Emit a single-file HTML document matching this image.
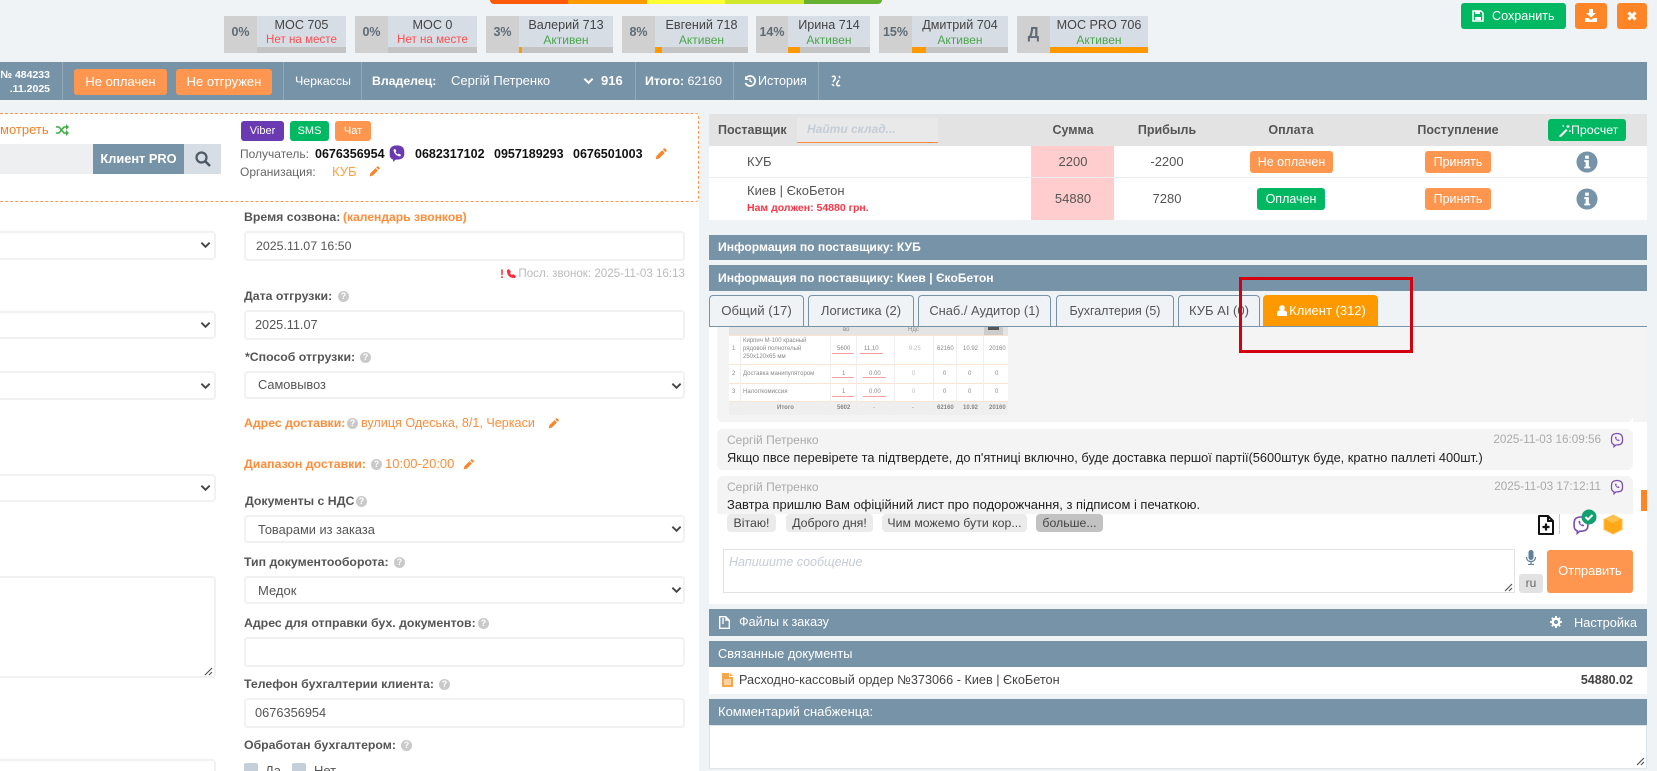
<!DOCTYPE html>
<html lang="ru"><head><meta charset="utf-8"><title>Заказ</title>
<style>
html{margin:0;padding:0;width:1657px;height:771px;overflow:hidden}
body{margin:0;padding:0;width:1657px;height:771px;overflow:hidden;position:relative;background:#eff3f6;font-family:"Liberation Sans",sans-serif;font-size:13px;color:#555}
.a{position:absolute}
.t{position:absolute;line-height:20px;height:20px;white-space:nowrap}
.b{font-weight:bold}
.c{text-align:center}
.l{font-size:12.3px}
.btn{position:absolute;border-radius:3px;color:#fff;text-align:center;white-space:nowrap}
.bar{position:absolute;left:709px;width:938px;background:#7793a8;color:#fff}
.inp{position:absolute;box-sizing:border-box;background:#fff;border:2px solid #f1f1f1;border-radius:4px}
.chip{position:absolute;top:16px;height:37px;background:#d7dde5}
.chip i{position:absolute;left:0;top:0;bottom:0;background:#d0d0d0;font-style:normal;font-weight:bold;color:#5f6b77;text-align:center;line-height:33px;font-size:12.5px}
.chip b{position:absolute;top:0;right:0;font-weight:normal;font-size:12.6px;color:#444;text-align:center;line-height:18px;padding-top:0}
.chip u{position:absolute;right:0;text-decoration:none;top:15px;font-size:12px;text-align:center;line-height:18px}
.chip u.r{font-size:11.6px;color:#ff4d4d}
.chip u.g{color:#4aa64a}
.chip s{position:absolute;right:0;bottom:0;height:6px;background:#c4c4c4;text-decoration:none}
.chip s em{position:absolute;left:0;top:0;height:6px;background:#ff9900}
.q{position:absolute;width:11px;height:11px;border-radius:50%;background:#c9c9c9;color:#fff;font-size:9px;font-weight:bold;text-align:center;line-height:11px}
.sep{position:absolute;top:62px;height:38px;width:1px;background:#93a9ba}
.tab{position:absolute;top:295px;height:31px;box-sizing:border-box;border:1px solid #7793a8;border-bottom:0;border-radius:4px 4px 0 0;text-align:center;line-height:30px;color:#555;font-size:13px;white-space:nowrap}
.qr{position:absolute;top:514px;height:18px;background:#ebebeb;border-radius:4px;text-align:center;line-height:19px;font-size:12.3px;color:#444;white-space:nowrap}
.msg{position:absolute;left:717px;width:916px;background:#f4f4f4}
.im{position:absolute;font-size:6px;color:#888;line-height:8px;white-space:nowrap}
svg{position:absolute;display:block}
</style></head><body>
<svg width="0" height="0" style="position:absolute"><defs>
<symbol id="pen" viewBox="0 0 16 16"><path d="M1 15l1-4.500 7.500-7.500 3.500 3.500L5.500 14zM10.500 2l1.500-1.500a1 1 0 0 1 1.400 0l2.100 2.100a1 1 0 0 1 0 1.400L14 5.500z" fill="#f5862c"/></symbol>
<symbol id="chev" viewBox="0 0 12 8"><path d="M1.500 1.500L6 6l4.500-4.500" fill="none" stroke="#444" stroke-width="2"/></symbol>
<symbol id="vib" viewBox="0 0 16 16"><path d="M8 .8C4 .8 1.500 2.500 1.500 6.500v2.500c0 2.500 1.200 3.800 3 4.300v2.200l2.300-2.100H8c4.300 0 6.500-1.800 6.500-5V6.500C14.500 2.500 12 .8 8 .8z" fill="#6a3ab2"/><path d="M5 4.500l1.300-.6 1.200 2-.8.8c.4 1 1.100 1.700 2.100 2.100l.8-.8 2 1.200-.6 1.300c-3 .3-6.300-3-6-6z" fill="#fff"/></symbol>
<symbol id="vibo" viewBox="0 0 16 16"><path d="M8 1.500C4.500 1.500 2.500 3 2.500 6.500v2.500c0 2 1 3.200 2.500 3.700v2l2-1.800h1c3.500 0 5.500-1.500 5.500-4.300V6.500C13.500 3 11.500 1.500 8 1.500z" fill="none" stroke="#7d51b8" stroke-width="1.300"/><path d="M6 5l1-.5.800 1.400-.5.600c.3.600.7 1 1.300 1.300l.6-.5 1.400.8-.5 1c-2 .2-4.300-2.100-4.100-4.100z" fill="#7d51b8"/></symbol>
</defs></svg>

<!-- top rainbow -->
<div class="a" style="left:490px;top:0;width:392px;height:4px;border-radius:0 0 6px 6px;overflow:hidden;display:flex">
<div style="flex:1;background:#ff5a0a"></div><div style="flex:1;background:#ff9900"></div><div style="flex:1;background:#ffff33"></div><div style="flex:1;background:#d0e82a"></div><div style="flex:1;background:#66b032"></div></div>

<!-- chips -->
<div class="chip" style="left:224px;width:122px"><i style="width:33px">0%</i><b style="width:89px">МОС 705</b><u class="r" style="width:89px">Нет на месте</u><s style="width:89px"></s></div>
<div class="chip" style="left:355px;width:122px"><i style="width:33px">0%</i><b style="width:89px">МОС 0</b><u class="r" style="width:89px">Нет на месте</u><s style="width:89px"></s></div>
<div class="chip" style="left:486px;width:127px"><i style="width:33px">3%</i><b style="width:94px">Валерий 713</b><u class="g" style="width:94px">Активен</u><s style="width:94px"><em style="width:3px"></em></s></div>
<div class="chip" style="left:622px;width:126px"><i style="width:33px">8%</i><b style="width:93px">Евгений 718</b><u class="g" style="width:93px">Активен</u><s style="width:93px"><em style="width:7px"></em></s></div>
<div class="chip" style="left:756px;width:114px"><i style="width:32px">14%</i><b style="width:82px">Ирина 714</b><u class="g" style="width:82px">Активен</u><s style="width:82px"><em style="width:12px"></em></s></div>
<div class="chip" style="left:879px;width:129px"><i style="width:33px">15%</i><b style="width:96px">Дмитрий 704</b><u class="g" style="width:96px">Активен</u><s style="width:96px"><em style="width:14px"></em></s></div>
<div class="chip" style="left:1017px;width:131px"><i style="width:33px;font-size:16px;line-height:36px">Д</i><b style="width:98px">МОС PRO 706</b><u class="g" style="width:98px">Активен</u><s style="width:98px"><em style="width:98px"></em></s></div>

<!-- save buttons -->
<div class="btn" style="left:1461px;top:3px;width:105px;height:26px;background:#00b862;line-height:26px;text-align:left;text-indent:31px;font-size:12.6px">Сохранить</div>
<svg style="left:1472px;top:10px" width="12" height="12" viewBox="0 0 12 12"><path d="M1 1h8l2 2v8H1z" fill="none" stroke="#fff" stroke-width="1.500"/><rect x="3" y="1" width="5" height="3" fill="#fff"/><rect x="3" y="7" width="6" height="3" fill="#fff"/></svg>
<div class="btn" style="left:1575px;top:3px;width:32px;height:26px;background:#ff8527"></div>
<svg style="left:1585px;top:9px" width="12" height="13" viewBox="0 0 12 13"><path d="M4 0h4v4h3L6 8.500 1 4h3zM0 9h3.500L6 11l2.500-2H12v4H0z" fill="#fff"/></svg>
<div class="btn" style="left:1617px;top:3px;width:30px;height:26px;background:#ff8527"></div>
<svg style="left:1627px;top:11px" width="10" height="10" viewBox="0 0 10 10"><path d="M1.500 1.500l7 7M8.500 1.500l-7 7" stroke="#fff" stroke-width="3"/></svg>

<!-- header bar -->
<div class="a" style="left:0;top:62px;width:1647px;height:38px;background:#7793a8"></div>
<div class="t b" style="right:1607px;top:65px;color:#fff;font-size:10.500px">№ 484233</div>
<div class="t b" style="right:1607px;top:79px;color:#fff;font-size:10.500px">.11.2025</div>
<div class="sep" style="left:62px"></div>
<div class="btn" style="left:74px;top:69px;width:93px;height:26px;background:#ff9650;line-height:26px">Не оплачен</div>
<div class="btn" style="left:176px;top:69px;width:96px;height:26px;background:#ff9650;line-height:26px">Не отгружен</div>
<div class="sep" style="left:283px"></div><div class="sep" style="left:361px"></div><div class="sep" style="left:635px"></div><div class="sep" style="left:733px"></div><div class="sep" style="left:818px"></div>
<div class="t" style="left:295px;top:71px;color:#fff;font-size:12.400px">Черкассы</div>
<div class="t b" style="left:372px;top:71px;color:#fff;font-size:12.300px">Владелец:</div>
<div class="t" style="left:451px;top:71px;color:#fff">Сергій Петренко</div>
<svg style="left:583px;top:77px" width="11" height="8" viewBox="0 0 12 8"><path d="M1.500 1.500L6 6l4.500-4.500" fill="none" stroke="#fff" stroke-width="2.200"/></svg>
<div class="t b" style="left:601px;top:71px;color:#fff">916</div>
<div class="t" style="left:645px;top:71px;color:#fff;font-size:12.400px"><span class="b">Итого:</span> 62160</div>
<svg style="left:744px;top:75px" width="12" height="12" viewBox="0 0 12 12"><path d="M2.500 2.500A5 5 0 1 1 1.500 8" fill="none" stroke="#fff" stroke-width="1.800"/><path d="M1 1v4h4z" fill="#fff"/><path d="M6 3.500V6l2 1" fill="none" stroke="#fff" stroke-width="1.300"/></svg>
<div class="t" style="left:758px;top:71px;color:#fff;font-size:12.600px">История</div>
<svg style="left:830px;top:74px" width="12" height="14" viewBox="0 0 12 14"><path d="M2 3c2-2 4 0 3 2L3 8M10 11c-2 2-4 0-3-2l2-3M2 10l2 2M9 2l1 2" fill="none" stroke="#fff" stroke-width="1.500"/></svg>

<!-- left white -->
<div class="a" style="left:0;top:113px;width:699px;height:658px;background:#fff"></div>
<div class="a" style="left:-3px;top:113px;width:702px;height:89px;box-sizing:border-box;border:1px dashed #ff9650;border-radius:3px"></div>

<div class="t" style="left:0;top:120px;color:#f07f2a;font-size:13px">мотреть</div>
<svg style="left:56px;top:124px" width="13" height="12" viewBox="0 0 13 12"><path d="M0 3h3l5 6h3M0 9h3l5-6h3" fill="none" stroke="#3fae49" stroke-width="1.600"/><path d="M10 0l3 3-3 3zM10 6l3 3-3 3z" fill="#3fae49"/></svg>
<div class="a" style="left:0;top:144px;width:93px;height:30px;background:#eeeff0"></div>
<div class="a b c" style="left:93px;top:144px;width:91px;height:30px;background:#7793a8;color:#fff;line-height:30px;font-size:12.800px">Клиент PRO</div>
<div class="a" style="left:184px;top:144px;width:37px;height:30px;background:#d7dde5"></div>
<svg style="left:195px;top:151px" width="16" height="16" viewBox="0 0 16 16"><circle cx="6.500" cy="6.500" r="5" fill="none" stroke="#4c5965" stroke-width="2.200"/><path d="M10.500 10.500L15 15" stroke="#4c5965" stroke-width="2.600"/></svg>

<div class="btn" style="left:241px;top:121px;width:43px;height:20px;background:#6a3ab2;line-height:20px;font-size:11px">Viber</div>
<div class="btn" style="left:290px;top:121px;width:39px;height:20px;background:#00b862;line-height:20px;font-size:11px">SMS</div>
<div class="btn" style="left:335px;top:121px;width:36px;height:20px;background:#ff9650;line-height:20px;font-size:11px">Чат</div>
<div class="t" style="left:240px;top:144px;font-size:12px;color:#666">Получатель:</div>
<div class="t b" style="left:315px;top:144px;color:#111;font-size:12.500px">0676356954</div>
<svg style="left:388px;top:144px" width="18" height="19"><use href="#vib"/></svg>
<div class="t b" style="left:415px;top:144px;color:#111;font-size:12.500px">0682317102</div>
<div class="t b" style="left:494px;top:144px;color:#111;font-size:12.500px">0957189293</div>
<div class="t b" style="left:573px;top:144px;color:#111;font-size:12.500px">0676501003</div>
<svg style="left:655px;top:148px" width="12" height="12"><use href="#pen"/></svg>
<div class="t" style="left:240px;top:162px;font-size:12px;color:#666">Организация:</div>
<div class="t" style="left:332px;top:162px;color:#ffa040">КУБ</div>
<svg style="left:369px;top:166px" width="11" height="11"><use href="#pen"/></svg>

<!-- left col fields -->
<div class="inp" style="left:-4px;top:231px;width:220px;height:29px"></div>
<svg style="left:200px;top:241px" width="11" height="8"><use href="#chev"/></svg>
<div class="inp" style="left:-4px;top:311px;width:220px;height:28px"></div>
<svg style="left:200px;top:321px" width="11" height="8"><use href="#chev"/></svg>
<div class="inp" style="left:-4px;top:371px;width:220px;height:29px"></div>
<svg style="left:200px;top:382px" width="11" height="8"><use href="#chev"/></svg>
<div class="inp" style="left:-4px;top:474px;width:220px;height:28px"></div>
<svg style="left:200px;top:484px" width="11" height="8"><use href="#chev"/></svg>
<div class="inp" style="left:-4px;top:576px;width:220px;height:102px"></div>
<svg style="left:204px;top:667px" width="9" height="9" viewBox="0 0 9 9"><path d="M1 8l7-7M5 8l3-3" stroke="#555" stroke-width="1.200"/></svg>
<div class="inp" style="left:-4px;top:759px;width:220px;height:30px"></div>

<!-- middle col -->
<div class="t b l" style="left:244px;top:207px">Время созвона:</div>
<div class="t b l" style="left:343px;top:207px;color:#ff8c3a;font-size:12.100px">(календарь звонков)</div>
<div class="inp" style="left:244px;top:231px;width:441px;height:30px"></div>
<div class="t" style="left:256px;top:236px;font-size:12.400px">2025.11.07 16:50</div>
<div class="t b" style="left:500px;top:264px;color:#ff2d3d;font-size:12px">!</div>
<svg style="left:506px;top:269px" width="10" height="10" viewBox="0 0 10 10"><path d="M1 1l2-1 2 3-1 1c.5 1 1 1.500 2 2l1-1 3 2-1 2C4 9.500.5 6 1 1z" fill="#ff2d3d"/></svg>
<div class="t" style="right:972px;top:264px;color:#bbb;font-size:11.600px">Посл. звонок: 2025-11-03 16:13</div>
<div class="t b l" style="left:244px;top:286px">Дата отгрузки:</div><div class="q" style="left:338px;top:291px">?</div>
<div class="inp" style="left:244px;top:310px;width:441px;height:30px"></div>
<div class="t" style="left:255px;top:315px;font-size:12.700px">2025.11.07</div>
<div class="t b l" style="left:245px;top:347px">*Способ отгрузки:</div><div class="q" style="left:360px;top:352px">?</div>
<div class="inp" style="left:244px;top:371px;width:441px;height:28px"></div>
<div class="t" style="left:258px;top:375px;font-size:12.800px">Самовывоз</div>
<svg style="left:671px;top:382px" width="11" height="8"><use href="#chev"/></svg>
<div class="t b l" style="left:244px;top:413px;color:#ff8c3a">Адрес доставки:</div><div class="q" style="left:347px;top:418px">?</div>
<div class="t" style="left:361px;top:413px;color:#ff8c3a;font-size:12.600px">вулиця Одеська, 8/1, Черкаси</div>
<svg style="left:548px;top:418px" width="11" height="11"><use href="#pen"/></svg>
<div class="t b l" style="left:244px;top:454px;color:#ff8c3a">Диапазон доставки:</div><div class="q" style="left:371px;top:459px">?</div>
<div class="t" style="left:385px;top:454px;color:#ff8c3a">10:00-20:00</div>
<svg style="left:463px;top:459px" width="11" height="11"><use href="#pen"/></svg>
<div class="t b l" style="left:245px;top:491px">Документы с НДС</div><div class="q" style="left:356px;top:496px">?</div>
<div class="inp" style="left:244px;top:515px;width:441px;height:28px"></div>
<div class="t" style="left:258px;top:520px;font-size:12.800px">Товарами из заказа</div>
<svg style="left:671px;top:525px" width="11" height="8"><use href="#chev"/></svg>
<div class="t b l" style="left:244px;top:552px">Тип документооборота:</div><div class="q" style="left:394px;top:557px">?</div>
<div class="inp" style="left:244px;top:576px;width:441px;height:28px"></div>
<div class="t" style="left:258px;top:581px">Медок</div>
<svg style="left:671px;top:586px" width="11" height="8"><use href="#chev"/></svg>
<div class="t b l" style="left:244px;top:613px">Адрес для отправки бух. документов:</div><div class="q" style="left:478px;top:618px">?</div>
<div class="inp" style="left:244px;top:637px;width:441px;height:30px"></div>
<div class="t b l" style="left:244px;top:674px">Телефон бухгалтерии клиента:</div><div class="q" style="left:439px;top:679px">?</div>
<div class="inp" style="left:244px;top:698px;width:441px;height:30px"></div>
<div class="t" style="left:255px;top:703px;font-size:12.800px">0676356954</div>
<div class="t b l" style="left:244px;top:735px">Обработан бухгалтером:</div><div class="q" style="left:401px;top:740px">?</div>
<div class="a" style="left:244px;top:763px;width:14px;height:14px;background:#c5cfd9;border-radius:2px"></div>
<div class="t" style="left:265px;top:761px">Да</div>
<div class="a" style="left:292px;top:763px;width:14px;height:14px;background:#c5cfd9;border-radius:2px"></div>
<div class="t" style="left:314px;top:761px">Нет</div>

<!-- supplier table -->
<div class="a" style="left:709px;top:114px;width:938px;height:32px;background:#e3e3e3"></div>
<div class="t b" style="left:718px;top:120px;font-size:12.500px">Поставщик</div>
<div class="a" style="left:797px;top:118px;width:141px;height:25px;box-sizing:border-box;background:#e9e9e9;border-bottom:1px solid #ff8c3a"></div>
<div class="t b" style="left:807px;top:119px;font-style:italic;color:#c5ccd6;font-size:12px">Найти склад...</div>
<div class="t c b" style="left:1023px;top:120px;width:100px;font-size:12.500px">Сумма</div>
<div class="t c b" style="left:1117px;top:120px;width:100px;font-size:12.500px">Прибыль</div>
<div class="t c b" style="left:1241px;top:120px;width:100px;font-size:12.500px">Оплата</div>
<div class="t c b" style="left:1398px;top:120px;width:120px;font-size:12.500px">Поступление</div>
<div class="btn" style="left:1548px;top:119px;width:78px;height:22px;background:#00b862;line-height:22px;text-align:left;text-indent:23px;font-size:12.400px">Просчет</div>
<svg style="left:1558px;top:124px" width="13" height="13" viewBox="0 0 13 13"><path d="M1 12l7-7 1.500 1.500-7 7z" fill="#fff"/><path d="M10 1v3M8.500 2.500h3M5 1l.5 2M12 6l-.1 2" stroke="#fff" stroke-width="1.200"/></svg>

<div class="a" style="left:709px;top:146px;width:938px;height:74px;background:#fff"></div>
<div class="a" style="left:709px;top:177px;width:938px;height:1px;background:#ececec"></div>
<div class="a" style="left:1031px;top:146px;width:83px;height:31px;background:#ffcdcd"></div>
<div class="a" style="left:1031px;top:178px;width:83px;height:42px;background:#ffcdcd"></div>
<div class="t" style="left:747px;top:152px">КУБ</div>
<div class="t" style="left:747px;top:181px">Киев | ЄкоБетон</div>
<div class="t b" style="left:747px;top:198px;color:#ff3344;font-size:10.500px">Нам должен: 54880 грн.</div>
<div class="t c" style="left:1023px;top:152px;width:100px">2200</div>
<div class="t c" style="left:1023px;top:189px;width:100px">54880</div>
<div class="t c" style="left:1117px;top:152px;width:100px">-2200</div>
<div class="t c" style="left:1117px;top:189px;width:100px">7280</div>
<div class="btn" style="left:1250px;top:151px;width:83px;height:22px;background:#ff9650;line-height:22px;font-size:12.500px">Не оплачен</div>
<div class="btn" style="left:1257px;top:188px;width:68px;height:22px;background:#00b862;line-height:22px;font-size:12.500px">Оплачен</div>
<div class="btn" style="left:1425px;top:151px;width:66px;height:22px;background:#ff9650;line-height:22px;font-size:12.500px">Принять</div>
<div class="btn" style="left:1425px;top:188px;width:66px;height:22px;background:#ff9650;line-height:22px;font-size:12.500px">Принять</div>
<svg style="left:1576px;top:151px" width="22" height="22" viewBox="0 0 24 24"><circle cx="12" cy="12" r="11.500" fill="#7793a8"/><rect x="10" y="5" width="4" height="3.500" fill="#fff"/><path d="M9 10h5v7h1.500v2h-6.500v-2h1.500v-5H9z" fill="#fff"/></svg>
<svg style="left:1576px;top:188px" width="22" height="22" viewBox="0 0 24 24"><circle cx="12" cy="12" r="11.500" fill="#7793a8"/><rect x="10" y="5" width="4" height="3.500" fill="#fff"/><path d="M9 10h5v7h1.500v2h-6.500v-2h1.500v-5H9z" fill="#fff"/></svg>

<div class="bar b" style="top:235px;height:25px;line-height:25px;text-indent:9px;font-size:12.100px">Информация по поставщику: КУБ</div>
<div class="bar b" style="top:265px;height:26px;line-height:26px;text-indent:9px;font-size:12.100px">Информация по поставщику: Киев | ЄкоБетон</div>

<!-- tabs -->
<div class="tab" style="left:709px;width:95px;font-size:13.200px">Общий (17)</div>
<div class="tab" style="left:808px;width:106px">Логистика (2)</div>
<div class="tab" style="left:918px;width:133px;font-size:12.900px">Снаб./ Аудитор (1)</div>
<div class="tab" style="left:1056px;width:118px;font-size:12.500px">Бухгалтерия (5)</div>
<div class="tab" style="left:1178px;width:82px">КУБ AI (0)</div>
<div class="tab" style="left:1263px;width:115px;background:#ff9900;border-color:#ff9900;color:#fff;text-indent:14px">Клиент (312)</div>
<svg style="left:1277px;top:305px" width="10" height="11" viewBox="0 0 10 11"><circle cx="5" cy="3" r="2.800" fill="#fff"/><path d="M0 11V8c0-1.500 1.500-2.500 2.500-2.500h5C8.500 5.500 10 6.500 10 8v3z" fill="#fff"/></svg>

<!-- chat -->
<div class="a" style="left:709px;top:326px;width:938px;height:278px;background:#fff"></div>
<div class="a" style="left:709px;top:326px;width:938px;height:1px;background:#7793a8"></div>
<div class="msg" style="top:327px;height:95px;border-radius:0 0 6px 6px"></div>
<div class="a" style="left:1633px;top:327px;width:14px;height:95px;background:#f4f4f4"></div>
<div class="a" style="left:709px;top:327px;width:8px;height:95px;background:#fff"></div>

<!-- mini image table -->
<div class="a" style="left:729px;top:327px;width:279px;height:88px;background:#fff"></div>
<div class="a" style="left:729px;top:327px;width:279px;height:8px;background:#e4e4e4"></div>
<div class="a" style="left:729px;top:335px;width:279px;height:1px;background:#fbe3cf"></div>
<div class="a" style="left:729px;top:364px;width:279px;height:1px;background:#fbe3cf"></div>
<div class="a" style="left:729px;top:383px;width:279px;height:1px;background:#fbe3cf"></div>
<div class="a" style="left:729px;top:401px;width:279px;height:1px;background:#fbe3cf"></div>
<div class="a" style="left:729px;top:402px;width:279px;height:13px;background:#efefef"></div>
<div class="a" style="left:740px;top:335px;width:1px;height:80px;background:#eee"></div>
<div class="a" style="left:830px;top:335px;width:1px;height:80px;background:#eee"></div>
<div class="a" style="left:856px;top:335px;width:1px;height:80px;background:#eee"></div>
<div class="a" style="left:894px;top:335px;width:1px;height:80px;background:#eee"></div>
<div class="a" style="left:933px;top:335px;width:1px;height:80px;background:#eee"></div>
<div class="a" style="left:956px;top:335px;width:1px;height:80px;background:#eee"></div>
<div class="a" style="left:983px;top:335px;width:1px;height:80px;background:#eee"></div>
<div class="a" style="left:984px;top:327px;width:19px;height:8px;background:#ccc"></div>
<div class="a" style="left:988px;top:327px;width:11px;height:3px;background:#555"></div>
<div class="im" style="left:843px;top:326px">во</div><div class="im" style="left:908px;top:326px">Ндс</div>
<div class="im" style="left:732px;top:345px">1</div>
<div class="im" style="left:743px;top:337px">Кирпич М-100 красный<br>рядовой полнотелый<br>250х120х65 мм</div>
<div class="im" style="left:732px;top:370px">2</div><div class="im" style="left:743px;top:370px">Доставка манипулятором</div>
<div class="im" style="left:732px;top:388px">3</div><div class="im" style="left:743px;top:388px">Налог/комиссия</div>
<div class="im" style="left:837px;top:345px">5600</div><div class="im" style="left:864px;top:345px">11,10</div><div class="im" style="left:909px;top:345px;color:#bbb">9.25</div><div class="im" style="left:937px;top:345px">62160</div><div class="im" style="left:963px;top:345px">10.92</div><div class="im" style="left:989px;top:345px">20160</div>
<div class="im" style="left:842px;top:370px">1</div><div class="im" style="left:869px;top:370px">0.00</div><div class="im" style="left:912px;top:370px;color:#bbb">0</div><div class="im" style="left:943px;top:370px">0</div><div class="im" style="left:968px;top:370px">0</div><div class="im" style="left:995px;top:370px">0</div>
<div class="im" style="left:842px;top:388px">1</div><div class="im" style="left:869px;top:388px">0.00</div><div class="im" style="left:912px;top:388px;color:#bbb">0</div><div class="im" style="left:943px;top:388px">0</div><div class="im" style="left:968px;top:388px">0</div><div class="im" style="left:995px;top:388px">0</div>
<div class="im b" style="left:777px;top:404px">Итого</div><div class="im b" style="left:837px;top:404px">5602</div><div class="im" style="left:873px;top:404px">-</div><div class="im" style="left:912px;top:404px">-</div><div class="im b" style="left:937px;top:404px">62160</div><div class="im b" style="left:963px;top:404px">10.92</div><div class="im b" style="left:989px;top:404px">20160</div>
<div class="a" style="left:832px;top:353px;width:22px;height:1px;background:#f3a0a0"></div><div class="a" style="left:860px;top:353px;width:23px;height:1px;background:#f3a0a0"></div>
<div class="a" style="left:832px;top:377px;width:22px;height:1px;background:#f3a0a0"></div><div class="a" style="left:863px;top:377px;width:23px;height:1px;background:#f3a0a0"></div>
<div class="a" style="left:832px;top:396px;width:22px;height:1px;background:#f3a0a0"></div><div class="a" style="left:863px;top:396px;width:23px;height:1px;background:#f3a0a0"></div>

<!-- messages -->
<div class="msg" style="top:429px;height:41px;border-radius:6px"></div>
<div class="t" style="left:727px;top:430px;color:#aaa;font-size:12px">Сергій Петренко</div>
<div class="t" style="right:56px;top:430px;color:#aaa;font-size:11.700px">2025-11-03 16:09:56</div>
<svg style="left:1609px;top:432px" width="16" height="16"><use href="#vibo"/></svg>
<div class="t" style="left:727px;top:448px;color:#222;font-size:12.800px">Якщо пвсе перевірете та підтвердете, до п'ятниці включно, буде доставка першої партії(5600штук буде, кратно паллеті 400шт.)</div>
<div class="msg" style="top:476px;height:38px;border-radius:6px 6px 0 0"></div>
<div class="t" style="left:727px;top:477px;color:#aaa;font-size:12px">Сергій Петренко</div>
<div class="t" style="right:56px;top:477px;color:#aaa;font-size:11.700px">2025-11-03 17:12:11</div>
<svg style="left:1609px;top:479px" width="16" height="16"><use href="#vibo"/></svg>
<div class="t" style="left:727px;top:495px;color:#222;font-size:12.950px">Завтра пришлю Вам офіційний лист про подорожчання, з підписом і печаткою.</div>
<div class="a" style="left:1641px;top:490px;width:6px;height:21px;background:#ff8527"></div>

<!-- quick replies -->
<div class="qr" style="left:727px;width:49px">Вітаю!</div>
<div class="qr" style="left:786px;width:87px">Доброго дня!</div>
<div class="qr" style="left:882px;width:145px">Чим можемо бути кор...</div>
<div class="qr" style="left:1036px;width:67px;background:#c2c2c2">больше...</div>
<svg style="left:1537px;top:515px" width="18" height="20" viewBox="0 0 18 20"><path d="M2 1h9l5 5v13H2z" fill="#fff" stroke="#111" stroke-width="2" stroke-linejoin="round"/><path d="M11 1v5h5" fill="none" stroke="#111" stroke-width="2"/><path d="M9 8.500v7M5.500 12h7" stroke="#111" stroke-width="2.200"/></svg>
<div class="a" style="left:1559px;top:514px;width:1px;height:20px;background:#ccc"></div>
<svg style="left:1571px;top:515px" width="20" height="20"><use href="#vibo"/></svg>
<svg style="left:1581px;top:509px" width="16" height="16" viewBox="0 0 16 16"><circle cx="8" cy="8" r="7.500" fill="#12a070"/><path d="M4.500 8l2.500 2.500 4.500-4.500" fill="none" stroke="#fff" stroke-width="2"/></svg>
<svg style="left:1603px;top:514px" width="20" height="21" viewBox="0 0 20 21"><path d="M10 1l9 4.500v10L10 20l-9-4.500v-10z" fill="#ffa91a" stroke="#ffc04d" stroke-width="1"/><path d="M1.500 5.500L10 10l8.500-4.500L10 1.500z" fill="#ffc04d"/><path d="M1.500 5.500L10 10l8.500-4.500M10 10v10" fill="none" stroke="#ffa91a" stroke-width="1.500"/></svg>

<!-- input -->
<div class="a" style="left:723px;top:549px;width:792px;height:44px;box-sizing:border-box;background:#fff;border:1px solid #e2e2e2"></div>
<div class="t" style="left:729px;top:552px;font-style:italic;color:#c5ccd6;font-size:12.500px">Напишите сообщение</div>
<svg style="left:1504px;top:583px" width="9" height="9" viewBox="0 0 9 9"><path d="M1 8l7-7M5 8l3-3" stroke="#555" stroke-width="1.200"/></svg>
<svg style="left:1525px;top:550px" width="12" height="15" viewBox="0 0 12 15"><rect x="3.500" y="0" width="5" height="10" rx="2.500" fill="#5f7f9c"/><path d="M1.500 7c0 3 2 4.500 4.500 4.500S10.500 10 10.500 7M6 11.500V14M3 14.500h6" fill="none" stroke="#5f7f9c" stroke-width="1.200"/></svg>
<div class="a c" style="left:1519px;top:574px;width:24px;height:19px;background:#e2e2e2;border-radius:3px;line-height:19px;font-size:12px;color:#666">ru</div>
<div class="btn" style="left:1547px;top:550px;width:86px;height:43px;background:#ff9650;line-height:42px;font-size:12.800px">Отправить</div>

<!-- bottom bars -->
<div class="bar" style="top:609px;height:27px;line-height:27px"><span class="a" style="left:30px;white-space:nowrap;font-size:12.600px">Файлы к заказу</span><span class="a" style="left:865px;white-space:nowrap;font-size:12.800px">Настройка</span></div>
<svg style="left:719px;top:616px" width="11" height="13" viewBox="0 0 11 13"><path d="M.7.700h6l3.600 3.600v8H.700z" fill="none" stroke="#fff" stroke-width="1.400"/><path d="M7 1v3h3M4 2v6" fill="none" stroke="#fff" stroke-width="1.400"/></svg>
<svg style="left:1550px;top:616px" width="12" height="12" viewBox="0 0 12 12"><circle cx="6" cy="6" r="3.300" fill="none" stroke="#fff" stroke-width="2.400"/><path d="M6 0v2.500M6 9.500V12M0 6h2.500M9.500 6H12M1.800 1.800l1.800 1.800M8.400 8.400l1.800 1.800M10.200 1.800L8.400 3.600M3.600 8.400l-1.800 1.800" stroke="#fff" stroke-width="1.800"/></svg>
<div class="bar" style="top:641px;height:26px;line-height:26px;text-indent:9px;font-size:12.800px">Связанные документы</div>
<div class="a" style="left:709px;top:667px;width:938px;height:27px;background:#fff"></div>
<svg style="left:722px;top:673px" width="11" height="14" viewBox="0 0 11 14"><path d="M0 0h7v4h4v10H0z" fill="#f9a54a"/><path d="M8 0l3 3H8z" fill="#f9a54a"/><path d="M2 7h7M2 9h7M2 11h7" stroke="#fff" stroke-width="1"/></svg>
<div class="t" style="left:739px;top:670px;color:#444;font-size:12.700px">Расходно-кассовый ордер №373066 - Киев | ЄкоБетон</div>
<div class="t b" style="right:24px;top:670px;color:#444;font-size:12.500px">54880.02</div>
<div class="bar" style="top:699px;height:26px;line-height:26px;text-indent:9px">Комментарий снабженца:</div>
<div class="a" style="left:709px;top:725px;width:938px;height:44px;box-sizing:border-box;background:#fff;border:1px solid #dde4ea"></div>
<svg style="left:1636px;top:757px" width="9" height="9" viewBox="0 0 9 9"><path d="M1 8l7-7M5 8l3-3" stroke="#555" stroke-width="1.200"/></svg>

<!-- red annotation -->
<div class="a" style="left:1239px;top:277px;width:174px;height:76px;box-sizing:border-box;border:3px solid #d40010"></div>
</body></html>
